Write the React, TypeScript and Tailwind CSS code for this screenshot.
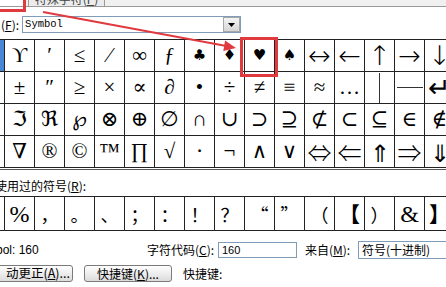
import React from "react";

const rows: string[][] = [
  ["", "ϒ", "′", "≤", "⁄", "∞", "ƒ", "♣", "♦", "♥", "♠", "↔", "←", "↑", "→", "↓"],
  ["", "±", "″", "≥", "×", "∝", "∂", "•", "÷", "≠", "≡", "≈", "…", "VLINE", "HLINE", "↵"],
  ["", "ℑ", "ℜ", "℘", "⊗", "⊕", "∅", "∩", "∪", "⊃", "⊇", "⊄", "⊂", "⊆", "∈", "∉"],
  ["", "∇", "®", "©", "™", "∏", "√", "⋅", "¬", "∧", "∨", "⇔", "⇐", "⇑", "⇒", "⇓"],
];

const arrows = new Set(["↔", "←", "↑", "→", "↓", "↵"]);
const dbl = new Set(["⇔", "⇐", "⇑", "⇒", "⇓"]);
const suits = new Set(["♣", "♦", "♥", "♠"]);

const recent = ["", "%", "，", "。", "、", "；", "：", "！", "？", "“", "”", "（", "【", "）", "&", "】"];

function Sym({ s }: { s: string }) {
  if (s === "VLINE") return <span className="block w-[1px] h-[30px] bg-[#333]" />;
  if (s === "HLINE") return <span className="block w-[26px] h-[1px] bg-[#333]" />;
  if (arrows.has(s))
    return <span className="font-['DejaVu_Sans',sans-serif] font-extralight text-[27px] leading-none">{s}</span>;
  if (dbl.has(s))
    return <span className="font-['Noto_Sans_CJK_JP','DejaVu_Sans',sans-serif] font-light text-[24px] leading-none">{s}</span>;
  if (suits.has(s))
    return <span className="font-['DejaVu_Sans',sans-serif] text-[15px] leading-none">{s}</span>;
  return <span className="leading-none">{s}</span>;
}

export default function App() {
  return (
    <div className="relative w-[446px] h-[287px] overflow-hidden bg-white text-black font-['Noto_Sans_CJK_SC',sans-serif] text-[12px]">
      {/* tab strip */}
      <div className="flex items-end h-[7px] overflow-hidden bg-[#f0f0f0] border-b border-[#9a9a9a]">
        <div className="self-stretch w-[26px] bg-white shrink-0" />
        <div className="ml-[2px] w-[77px] h-[20px] shrink-0 bg-[#ececec] border border-b-0 border-[#9a9a9a] flex items-end justify-center leading-none text-[12px] text-[#444] pb-[1px]">
          特殊字符(<span className="underline">P</span>)
        </div>
      </div>

      {/* font row */}
      <div className="flex items-center h-[17px] mt-[9px]">
        <span className="pl-[1px] leading-none text-[12px] shrink-0">
          (<span className="underline">F</span>):
        </span>
        <div className="ml-[3px] w-[219px] h-[17px] shrink-0 border border-[#7f9db9] bg-white flex items-center">
          <span className="flex-1 pl-[2px] font-['Liberation_Mono',monospace] text-[10.5px] leading-none">Symbol</span>
          <div className="w-[17px] h-[15px] bg-gradient-to-b from-[#f4f4f4] to-[#d6d6d6] border border-[#a8a8a8] flex items-center justify-center">
            <svg width="7" height="4" viewBox="0 0 7 4">
              <polygon points="0,0 7,0 3.5,4" fill="#000" />
            </svg>
          </div>
        </div>
      </div>

      {/* symbol grid */}
      <div className="mt-[6px] ml-[-26px] w-max border-t border-l border-[#222] font-['Liberation_Serif','DejaVu_Serif','DejaVu_Sans',serif]">
        {rows.map((r, ri) => (
          <div key={ri} className="flex">
            {r.map((s, ci) => (
              <div
                key={ci}
                className={`w-[30px] h-[32px] shrink-0 overflow-hidden border-r border-b border-[#222] flex items-center justify-center text-[21px] leading-none ${
                  ri === 0 && ci === 0 ? "bg-[#4a86d6]" : ""
                }`}
              >
                <Sym s={s} />
              </div>
            ))}
          </div>
        ))}
      </div>
      <div className="h-[1px] bg-white" />
      <div className="h-[1px] bg-[#555]" />

      {/* recent label */}
      <div className="h-[26px] flex items-center pt-[6px] ml-[-5px] leading-none">
        使用过的符号(<span className="underline">R</span>):
      </div>

      {/* recent row */}
      <div className="ml-[-26px] w-max flex border-t border-b border-l border-[#222]">
        {recent.map((s, i) => (
          <div
            key={i}
            className={`w-[30px] h-[33px] shrink-0 border-r border-[#222] flex items-center justify-center leading-none ${
              s === "%" || s === "&"
                ? "font-['Liberation_Serif',serif] text-[24px]"
                : s === "【" || s === "】"
                ? "font-['Noto_Sans_CJK_SC',sans-serif] text-[21px] font-bold"
                : "font-['Noto_Sans_CJK_SC',sans-serif] text-[18px]"
            }`}
          >
            {s}
          </div>
        ))}
      </div>

      {/* info row */}
      <div className="flex items-center h-[18px] mt-[10px]">
        <span className="ml-[-4px] w-[151px] shrink-0 font-['Liberation_Sans',sans-serif] text-[12px] leading-none">bol: 160</span>
        <span className="w-[71px] shrink-0 leading-none">
          字符代码(<span className="underline">C</span>):
        </span>
        <div className="w-[79px] h-[16px] shrink-0 border border-[#7f9db9] bg-white flex items-center pl-[3px] font-['Liberation_Sans',sans-serif] text-[11px]">
          160
        </div>
        <span className="ml-[8px] w-[53px] shrink-0 leading-none">
          来自(<span className="underline">M</span>):
        </span>
        <div className="w-[100px] h-[18px] shrink-0 border border-[#7f9db9] bg-white flex items-center pl-[3px] leading-none">
          符号(十进制)
        </div>
      </div>

      {/* buttons row */}
      <div className="flex items-center h-[17px] mt-[6px]">
        <div className="ml-[-20px] w-[93px] h-[17px] shrink-0 rounded-[3px] border border-[#7a7a7a] bg-gradient-to-b from-white to-[#dcdcdc] flex items-center justify-end pr-[2px] leading-none text-[12.5px]">
          动更正(<span className="underline">A</span>)...
        </div>
        <div className="ml-[11px] w-[88px] h-[17px] shrink-0 rounded-[3px] border border-[#7a7a7a] bg-gradient-to-b from-white to-[#dcdcdc] flex items-center justify-center leading-none">
          快捷键(<span className="underline">K</span>)...
        </div>
        <span className="ml-[11px] leading-none">快捷键:</span>
      </div>

      {/* annotations */}
      <div className="absolute left-[-3px] top-[-3px] w-[29px] h-[15px] border-[3px] border-[#e0393e]" />
      <div className="absolute left-[240px] top-[37px] w-[38px] h-[40px] border-[3px] border-[#e0393e]" />
      <svg className="absolute left-0 top-0 pointer-events-none" width="446" height="287">
        <line x1="43" y1="12" x2="225" y2="45.8" stroke="#e0393e" strokeWidth="2" />
        <polygon points="236,48 223.3,51 225.1,40.6" fill="#e0393e" />
      </svg>
    </div>
  );
}
